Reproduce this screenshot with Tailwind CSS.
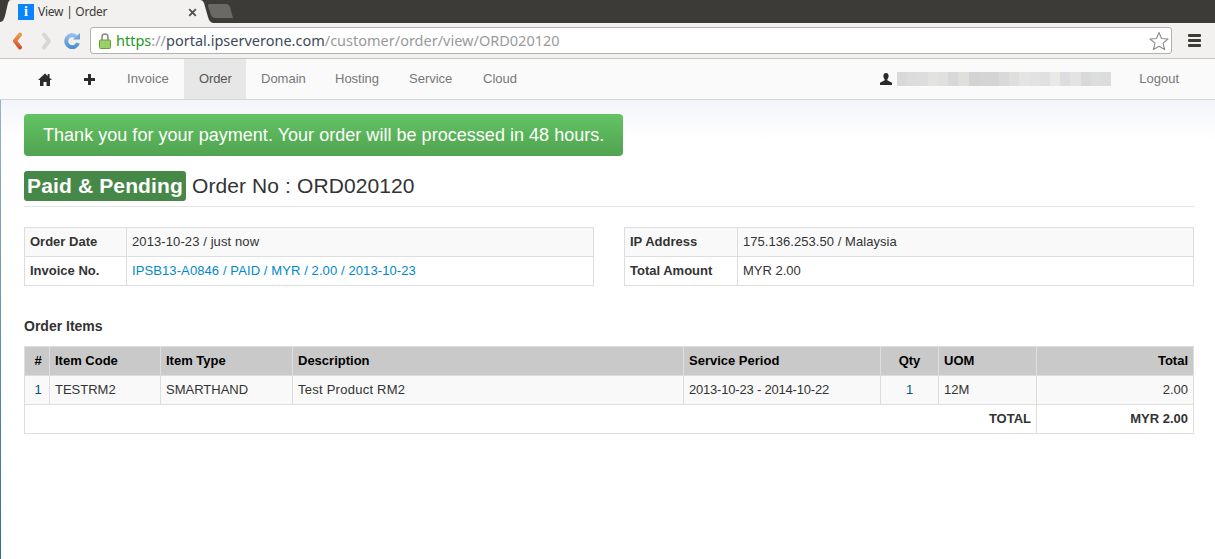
<!DOCTYPE html>
<html lang="en">
<head>
  <meta charset="UTF-8" />
  <title>View | Order</title>
  <script src="https://cdn.jsdelivr.net/npm/@tailwindcss/browser@4"></script>
</head>
<body class="h-[559px] w-[1215px] overflow-hidden bg-white font-['Liberation_Sans',sans-serif] text-[13px] text-[#333]">
  <!-- Tab strip -->
  <div class="relative h-[23px] bg-[#3d3b37] font-['Noto_Sans',sans-serif]">
    <svg class="absolute left-0 top-0" width="240" height="23" viewBox="0 0 240 23">
      <path d="M0 23V22C3 22 4 19 5 16L8 3C9 1 9 0 11 0H200C202 0 203 1 204 3L208 17C209 21 211 23 214 23Z" fill="#f2f1ef" />
      <path d="M209 4H226C228 4 229 5 230 7L233 18H215C213 18 212 17 211 15L208 6C208 5 208 4 209 4Z" fill="#6b6965" />
    </svg>
    <div class="relative flex h-[23px] items-center pl-[18px]">
      <span class="flex h-4 w-4 items-center justify-center bg-[#0a84ff] font-['Liberation_Serif',serif] text-[14px] font-bold text-white">i</span>
      <span class="ml-1 text-[12px] tracking-[-0.25px] text-[#3c3b37]">View | Order</span>
      <svg class="absolute left-[188px] top-[8px]" width="9" height="9" viewBox="0 0 9 9"><path d="M1.200 1.200L7.800 7.800M7.800 1.200L1.200 7.800" stroke="#55534f" stroke-width="1.900" /></svg>
    </div>
  </div>
  <!-- Toolbar -->
  <div class="flex h-[36px] items-center border-b border-[#c6c5c2] bg-[#f2f1ef]">
    <svg class="ml-[11px]" width="14" height="18" viewBox="0 0 14 18">
      <defs><linearGradient id="back" x1="0" y1="0" x2="0" y2="1"><stop offset="0" stop-color="#ee9a4a" /><stop offset="1" stop-color="#d2502e" /></linearGradient></defs>
      <path d="M9 2.500L4 9L9 15.500" fill="none" stroke="url(#back)" stroke-width="4" stroke-linecap="round" stroke-linejoin="round" />
    </svg>
    <svg class="ml-[14px]" width="14" height="18" viewBox="0 0 14 18"><path d="M5 2.500L10 9L5 15.500" fill="none" stroke="#d8d7d3" stroke-width="4" stroke-linecap="round" stroke-linejoin="round" /></svg>
    <svg class="ml-[11px]" width="17" height="17" viewBox="0 0 17 17">
      <defs><linearGradient id="reload" x1="0" y1="0" x2="0" y2="1"><stop offset="0" stop-color="#93bde6" /><stop offset="1" stop-color="#4f8fcf" /></linearGradient></defs>
      <path d="M14 11A6 6 0 1 1 12 4.500" fill="none" stroke="url(#reload)" stroke-width="4" /><path d="M9 7.500L16 7.500L16 1Z" fill="#6fa5da" />
    </svg>
    <div class="ml-[9px] flex h-[27px] w-[1082px] items-center rounded-[3px] border border-[#b3b1ad] bg-white pl-[7px] font-['Noto_Sans',sans-serif] text-[14.5px]">
      <svg width="14" height="18" viewBox="0 0 14 18"><path d="M4 8V5A3 3 0 0 1 10 5V8" fill="none" stroke="#8a8a86" stroke-width="1.600" /><rect x="1.500" y="8" width="11" height="8.500" rx="1" fill="#9ad06a" stroke="#62a03a" /></svg>
      <span class="ml-[4px] text-[#1d9b1d]">https</span><span class="text-[#9a9a9a]">://</span><span class="text-[#3c4a5a]">portal.ipserverone.com</span><span class="text-[#9a9a9a]">/customer/order/view/ORD020120</span>
      <svg class="ml-auto mr-[2px]" width="20" height="20" viewBox="0 0 20 20"><path d="M10 1.500L12.500 7.500L19 8L14 12.200L15.600 18.500L10 15.200L4.400 18.500L6 12.200L1 8L7.500 7.500Z" fill="#fff" stroke="#8c8c8c" stroke-width="1.100" stroke-linejoin="round" /></svg>
    </div>
    <div class="ml-[16px] flex w-[13px] flex-col gap-[2px]">
      <span class="h-[3px] rounded-[1px] bg-[#3c3b37]"></span>
      <span class="h-[3px] rounded-[1px] bg-[#3c3b37]"></span>
      <span class="h-[3px] rounded-[1px] bg-[#3c3b37]"></span>
    </div>
  </div>
  <!-- Nav -->
  <nav class="flex h-[41px] items-stretch border-b border-[#d4d4d4] bg-[#fafafa] text-[#777]">
    <span class="flex w-[52px] items-center justify-end">
      <svg width="14" height="13" viewBox="0 0 14 13"><path d="M7 0.500L0 7H2V13H5.500V9H8.500V13H12V7H14L11.500 4.700V1H9.700V3L7 0.500Z" fill="#2b2b2b" /></svg>
    </span>
    <span class="ml-[32px] flex items-center">
      <svg width="11" height="11" viewBox="0 0 11 11"><path d="M4 0H7V4H11V7H7V11H4V7H0V4H4Z" fill="#2b2b2b" /></svg>
    </span>
    <a class="ml-[17px] flex w-[72px] items-center pl-[15px] tracking-[0.1px]">Invoice</a>
    <a class="flex w-[62px] items-center bg-[#e7e7e7] pl-[15px] tracking-[-0.1px] text-[#555]">Order</a>
    <a class="flex w-[74px] items-center pl-[15px]">Domain</a>
    <a class="flex w-[74px] items-center pl-[15px]">Hosting</a>
    <a class="flex w-[74px] items-center pl-[15px]">Service</a>
    <a class="flex items-center pl-[15px]">Cloud</a>
    <span class="ml-auto flex items-center">
      <svg width="12" height="12" viewBox="0 0 12 12"><path d="M6 0C4.300 0 3.400 1.300 3.400 3C3.400 4.500 4 5.600 4.700 6.300V7.300L0 9.700V12H12V9.700L7.300 7.300V6.300C8 5.600 8.600 4.500 8.600 3C8.600 1.300 7.700 0 6 0Z" fill="#2b2b2b" /></svg>
      <span class="ml-[5px] flex h-[14px] w-[214px]">
        <i class="flex-1 bg-[#d9d9d9]"></i><i class="flex-1 bg-[#dcdcdc]"></i><i class="flex-1 bg-[#dddddb]"></i><i class="flex-1 bg-[#e2e2df]"></i><i class="flex-1 bg-[#e0e1df]"></i><i class="flex-1 bg-[#d7d8da]"></i><i class="flex-1 bg-[#dfdfdc]"></i><i class="flex-1 bg-[#d3d3d3]"></i><i class="flex-1 bg-[#d4d4d4]"></i><i class="flex-1 bg-[#d4d4d4]"></i><i class="flex-1 bg-[#d8d9da]"></i><i class="flex-1 bg-[#dedfdc]"></i><i class="flex-1 bg-[#e4e4e2]"></i><i class="flex-1 bg-[#e2e2e2]"></i><i class="flex-1 bg-[#e0e0e0]"></i><i class="flex-1 bg-[#e9e9e5]"></i><i class="flex-1 bg-[#dcdde0]"></i><i class="flex-1 bg-[#e2e3e2]"></i><i class="flex-1 bg-[#d8d9da]"></i><i class="flex-1 bg-[#dcdddd]"></i><i class="flex-1 bg-[#dcdcdc]"></i>
      </span>
    </span>
    <a class="ml-[13px] mr-[21px] flex items-center px-[15px]">Logout</a>
  </nav>
  <!-- Page -->
  <div class="flex h-[459px]">
    <div class="w-px bg-gradient-to-b from-[#9ab4bf] to-[#2a6f9e]"></div>
    <main class="flex-1 bg-gradient-to-b from-[#f4f5fb] to-white to-[40px] pl-[23px] pr-[21px] pt-[14px]">
      <div class="w-[599px] rounded-[4px] bg-gradient-to-b from-[#62c462] to-[#51a351] py-[10px] pl-[19px] text-[18px] leading-[22px] tracking-[0.03px] text-white">Thank you for your payment. Your order will be processed in 48 hours.</div>
      <div class="mt-[13px] flex h-[34px] items-center text-[21px] text-[#333]">
        <span class="rounded-[3px] bg-[#468847] px-[3px] leading-[30px] font-bold tracking-[0.14px] text-white">Paid &amp; Pending</span>
        <span class="ml-[6px] tracking-[0.1px]">Order No : ORD020120</span>
      </div>
      <div class="mt-[3px] border-b border-[#e5e5e5]"></div>

      <div class="mt-[20px] flex justify-between">
        <table class="w-[570px] table-fixed border-collapse border border-[#ddd]">
          <tbody>
            <tr class="h-[29px] bg-[#f9f9f9]">
              <td class="w-[102px] border border-[#ddd] px-[5px] font-bold">Order Date</td>
              <td class="border border-[#ddd] px-[5px] tracking-[0.1px]">2013-10-23 / just now</td>
            </tr>
            <tr class="h-[29px]">
              <td class="border border-[#ddd] px-[5px] font-bold">Invoice No.</td>
              <td class="border border-[#ddd] px-[5px] tracking-[0.1px] text-[#0088cc]">IPSB13-A0846 / PAID / MYR / 2.00 / 2013-10-23</td>
            </tr>
          </tbody>
        </table>
        <table class="w-[570px] table-fixed border-collapse border border-[#ddd]">
          <tbody>
            <tr class="h-[29px] bg-[#f9f9f9]">
              <td class="w-[113px] border border-[#ddd] px-[5px] font-bold">IP Address</td>
              <td class="border border-[#ddd] px-[5px] tracking-[0.05px]">175.136.253.50 / Malaysia</td>
            </tr>
            <tr class="h-[29px]">
              <td class="border border-[#ddd] px-[5px] font-bold">Total Amount</td>
              <td class="border border-[#ddd] px-[5px]">MYR 2.00</td>
            </tr>
          </tbody>
        </table>
      </div>

      <h4 class="mt-[30px] text-[14px] leading-[20px] font-bold">Order Items</h4>
      <table class="mt-[10px] w-[1170px] table-fixed border-collapse border border-[#ddd]">
        <thead>
          <tr class="h-[29px] bg-[#c9c9c9] font-bold text-black">
            <th class="w-[25px] border border-[#ddd] pl-[6px] pr-[4px] text-center">#</th>
            <th class="w-[111px] border border-[#ddd] px-[5px] text-left">Item Code</th>
            <th class="w-[132px] border border-[#ddd] px-[5px] text-left">Item Type</th>
            <th class="w-[391px] border border-[#ddd] px-[5px] text-left">Description</th>
            <th class="w-[197px] border border-[#ddd] px-[5px] text-left">Service Period</th>
            <th class="w-[58px] border border-[#ddd] px-[5px] text-center">Qty</th>
            <th class="w-[98px] border border-[#ddd] px-[5px] text-left">UOM</th>
            <th class="border border-[#ddd] px-[5px] text-right">Total</th>
          </tr>
        </thead>
        <tbody>
          <tr class="h-[29px] bg-[#f9f9f9]">
            <td class="border border-[#ddd] pl-[6px] pr-[4px] text-center text-[#005580]">1</td>
            <td class="border border-[#ddd] px-[5px]">TESTRM2</td>
            <td class="border border-[#ddd] px-[5px]">SMARTHAND</td>
            <td class="border border-[#ddd] px-[5px] tracking-[0.25px]">Test Product RM2</td>
            <td class="border border-[#ddd] px-[5px] tracking-[-0.2px]">2013-10-23 - 2014-10-22</td>
            <td class="border border-[#ddd] px-[5px] text-center text-[#005580]">1</td>
            <td class="border border-[#ddd] px-[5px]">12M</td>
            <td class="border border-[#ddd] px-[5px] text-right">2.00</td>
          </tr>
          <tr class="h-[29px]">
            <td colspan="7" class="border border-[#ddd] px-[5px] text-right font-bold">TOTAL</td>
            <td class="border border-[#ddd] px-[5px] text-right font-bold">MYR 2.00</td>
          </tr>
        </tbody>
      </table>
    </main>
  </div>
</body>
</html>
